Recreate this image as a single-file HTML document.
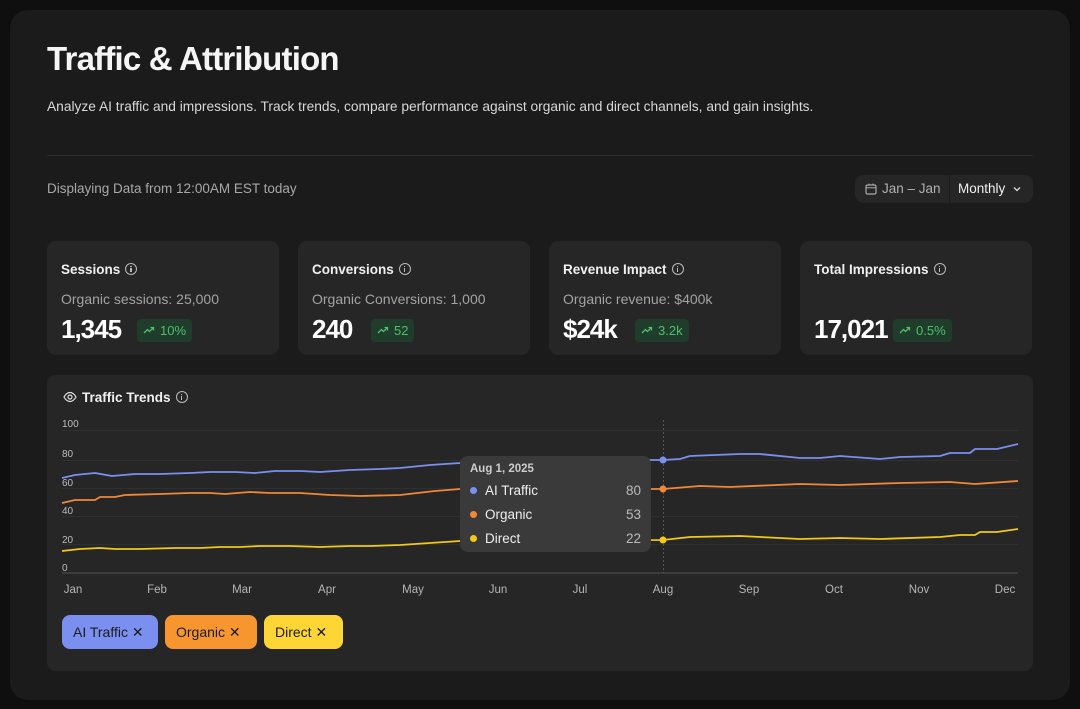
<!DOCTYPE html>
<html><head><meta charset="utf-8"><style>
*{box-sizing:border-box;margin:0;padding:0}
body{width:1080px;height:709px;background:#0f0f0f;font-family:"Liberation Sans",sans-serif;overflow:hidden;position:relative;color:#fff}
.panel{position:absolute;left:10px;top:10px;width:1060px;height:690px;background:#1b1b1b;border-radius:18px}
.abs{position:absolute}
h1{position:absolute;left:47px;top:40px;font-size:33px;font-weight:700;letter-spacing:-0.8px;color:#f5f5f5}
.sub{left:47px;top:99px;font-size:13.75px;color:#d8d8d8}
.hr{left:47px;top:155px;width:986px;height:1px;background:#2a2a2a}
.disp{left:47px;top:181px;font-size:13.5px;color:#a8a8a8}
.seg{left:855px;top:175px;width:178px;height:28px;background:#262626;border-radius:9px;font-size:13.5px}
.card{position:absolute;top:241px;width:232px;height:114px;background:#262626;border-radius:9px}
.card .t{position:absolute;left:14px;top:21px;font-size:13.5px;font-weight:700;color:#f0f0f0}
.card .o{position:absolute;left:14px;top:50px;font-size:14px;color:#a3a3a3}
.card .v{position:absolute;left:14px;top:73px;font-size:26px;font-weight:700;letter-spacing:-1px;color:#fff}
.badge{position:absolute;top:78px;height:23px;background:#1f3d2a;border-radius:4px;color:#4fbf6e;font-size:13px;padding:4px 6px 0 23px}
.badge svg{position:absolute;left:6px;top:6px}
.info{display:inline-block;width:12px;height:12px;border:1.2px solid #bbb;border-radius:50%;position:relative;vertical-align:-1px;margin-left:5px}
.info:after{content:"";position:absolute;left:4.2px;top:4px;width:1.3px;height:4px;background:#bbb}
.info:before{content:"";position:absolute;left:4.2px;top:1.8px;width:1.3px;height:1.3px;background:#bbb}
.chart{left:47px;top:375px;width:986px;height:296px;background:#262626;border-radius:9px}
.yl{position:absolute;left:62px;font-size:10px;color:#bdbdbd}
.xl{position:absolute;top:584px;font-size:11.5px;color:#b5b5b5;transform:translateX(-50%)}
.chip{position:absolute;top:615px;height:34px;border-radius:8px;font-size:14px;padding:9px 0 0 11px;color:#1b1b1b}
</style></head><body>
<div class="panel"></div>
<h1>Traffic &amp; Attribution</h1>
<div class="abs sub">Analyze AI traffic and impressions. Track trends, compare performance against organic and direct channels, and gain insights.</div>
<div class="abs hr"></div>
<div class="abs disp">Displaying Data from 12:00AM EST today</div>
<div class="abs seg">
<svg class="abs" style="left:10px;top:8px" width="12" height="12" viewBox="0 0 12 12"><rect x="1" y="2" width="10" height="9" rx="1.5" fill="none" stroke="#aaa" stroke-width="1.2"/><line x1="1" y1="4.8" x2="11" y2="4.8" stroke="#aaa"/><line x1="4" y1="0.5" x2="4" y2="2.5" stroke="#aaa"/><line x1="8" y1="0.5" x2="8" y2="2.5" stroke="#aaa"/></svg>
<span class="abs" style="left:27px;top:6px;color:#b0b0b0">Jan – Jan</span>
<div class="abs" style="left:94px;top:0;width:1px;height:28px;background:#1b1b1b"></div>
<span class="abs" style="left:103px;top:6px;color:#f0f0f0">Monthly</span>
<svg class="abs" style="left:158px;top:11px" width="8" height="6" viewBox="0 0 8 6"><path d="M1 1.5L4 4.5L7 1.5" fill="none" stroke="#ddd" stroke-width="1.3"/></svg>
</div>

<div class="card" style="left:47px"><div class="t">Sessions<span class="info"></span></div><div class="o">Organic sessions: 25,000</div><div class="v">1,345</div><div class="badge" style="left:90px"><svg width="12" height="10" viewBox="0 0 12 10"><path d="M1 8L4.5 4.5L6.5 6.5L10.5 2.5M7.5 2.5H10.5V5.5" fill="none" stroke="#4fbf6e" stroke-width="1.3"/></svg>10%</div></div>
<div class="card" style="left:298px"><div class="t">Conversions<span class="info"></span></div><div class="o">Organic Conversions: 1,000</div><div class="v">240</div><div class="badge" style="left:73px"><svg width="12" height="10" viewBox="0 0 12 10"><path d="M1 8L4.5 4.5L6.5 6.5L10.5 2.5M7.5 2.5H10.5V5.5" fill="none" stroke="#4fbf6e" stroke-width="1.3"/></svg>52</div></div>
<div class="card" style="left:549px"><div class="t">Revenue Impact<span class="info"></span></div><div class="o">Organic revenue: $400k</div><div class="v">$24k</div><div class="badge" style="left:86px"><svg width="12" height="10" viewBox="0 0 12 10"><path d="M1 8L4.5 4.5L6.5 6.5L10.5 2.5M7.5 2.5H10.5V5.5" fill="none" stroke="#4fbf6e" stroke-width="1.3"/></svg>3.2k</div></div>
<div class="card" style="left:800px"><div class="t">Total Impressions<span class="info"></span></div><div class="v">17,021</div><div class="badge" style="left:93px"><svg width="12" height="10" viewBox="0 0 12 10"><path d="M1 8L4.5 4.5L6.5 6.5L10.5 2.5M7.5 2.5H10.5V5.5" fill="none" stroke="#4fbf6e" stroke-width="1.3"/></svg>0.5%</div></div>

<div class="abs chart"></div>
<svg class="abs" style="left:63px;top:391px" width="14" height="12" viewBox="0 0 14 12"><path d="M1 6C3 2.5 5 1.5 7 1.5S11 2.5 13 6C11 9.5 9 10.5 7 10.5S3 9.5 1 6Z" fill="none" stroke="#ddd" stroke-width="1.2"/><circle cx="7" cy="6" r="2" fill="none" stroke="#ddd" stroke-width="1.2"/></svg>
<div class="abs" style="left:82px;top:390px;font-size:13.5px;font-weight:700;color:#f0f0f0">Traffic Trends<span class="info"></span></div>

<div class="yl" style="top:419px">100</div><div class="yl" style="top:449px">80</div><div class="yl" style="top:478px">60</div><div class="yl" style="top:506px">40</div><div class="yl" style="top:535px">20</div><div class="yl" style="top:563px">0</div>

<svg class="abs" style="left:0;top:0" width="1080" height="709">
<g stroke="#303030" stroke-width="1"><line x1="62" y1="430.5" x2="1018" y2="430.5"/><line x1="62" y1="460.5" x2="1018" y2="460.5"/><line x1="62" y1="488.5" x2="1018" y2="488.5"/><line x1="62" y1="516.5" x2="1018" y2="516.5"/><line x1="62" y1="544.5" x2="1018" y2="544.5"/></g>
<line x1="62" y1="573" x2="1018" y2="573" stroke="#444" stroke-width="1.5"/>
<line x1="663.5" y1="420" x2="663.5" y2="573" stroke="#555" stroke-dasharray="2 2"/>
<g fill="none" stroke-width="1.8" stroke-linejoin="round">
<polyline stroke="#7b8ff0" points="62,478 75,475 95,473 112,476 135,474 160,474 190,473 210,472 235,472 255,473 275,471 300,471 320,472 350,470 380,469 400,468 430,465 460,463 500,461 545,460 600,460 663,460 680,459 690,456 740,454 760,454 800,458 820,458 840,456 880,459 900,457 940,456 950,453 970,453 975,449 997,449 1018,444"/>
<polyline stroke="#f0883a" points="62,503 75,500 95,500 100,497 115,497 125,495 160,494 190,493 210,493 225,494 250,492 270,493 300,493 330,495 360,496 400,495 435,491 460,489 663,489 700,486 730,487 800,484 840,485 900,483 950,482 975,484 1018,481"/>
<polyline stroke="#f2c81a" points="62,551 80,549 100,548 115,549 140,549 175,548 200,548 220,547 240,547 260,546 290,546 320,547 350,546 370,546 400,545 430,543 460,541 663,540 690,537 740,536 800,539 840,538 880,539 940,537 960,535 975,535 980,532 997,532 1018,529"/>
</g>
<circle cx="663" cy="460" r="3.5" fill="#7b8ff0"/><circle cx="663" cy="489" r="3.5" fill="#f0883a"/><circle cx="663" cy="540" r="3.5" fill="#f2c81a"/>
</svg>

<div class="abs" style="left:460px;top:456px;width:191px;height:96px;background:#3a3a3a;border-radius:8px;font-size:13.5px">
<div class="abs" style="left:10px;top:7px;font-size:11.5px;color:#ccc;font-weight:700">Aug 1, 2025</div>
<div class="abs" style="left:10px;top:31px;width:7px;height:7px;border-radius:50%;background:#7b8ff0"></div><div class="abs" style="left:25px;top:27px;color:#eee">AI Traffic</div><div class="abs" style="right:10px;top:27px;color:#bbb">80</div>
<div class="abs" style="left:10px;top:55px;width:7px;height:7px;border-radius:50%;background:#f0883a"></div><div class="abs" style="left:25px;top:51px;color:#eee">Organic</div><div class="abs" style="right:10px;top:51px;color:#bbb">53</div>
<div class="abs" style="left:10px;top:79px;width:7px;height:7px;border-radius:50%;background:#f2c81a"></div><div class="abs" style="left:25px;top:75px;color:#eee">Direct</div><div class="abs" style="right:10px;top:75px;color:#bbb">22</div>
</div>

<div class="xl" style="left:73px">Jan</div><div class="xl" style="left:157px">Feb</div><div class="xl" style="left:242px">Mar</div><div class="xl" style="left:327px">Apr</div><div class="xl" style="left:413px">May</div><div class="xl" style="left:498px">Jun</div><div class="xl" style="left:580px">Jul</div><div class="xl" style="left:663px">Aug</div><div class="xl" style="left:749px">Sep</div><div class="xl" style="left:834px">Oct</div><div class="xl" style="left:919px">Nov</div><div class="xl" style="left:1005px">Dec</div>

<div class="chip" style="left:62px;width:96px;background:#7b8ff0">AI Traffic ✕</div>
<div class="chip" style="left:165px;width:92px;background:#f7962f">Organic ✕</div>
<div class="chip" style="left:264px;width:79px;background:#fdd535">Direct ✕</div>
</body></html>
